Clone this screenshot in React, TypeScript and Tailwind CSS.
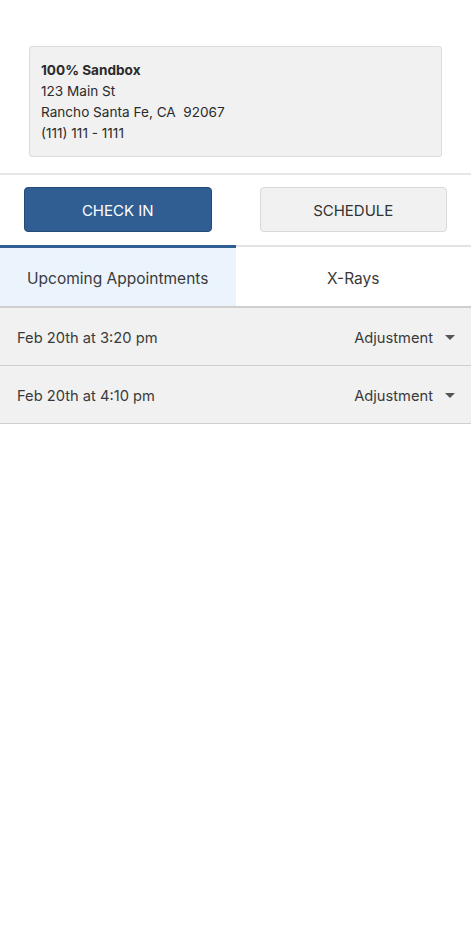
const appointments = [
  { when: "Feb 20th at 3:20 pm", type: "Adjustment" },
  { when: "Feb 20th at 4:10 pm", type: "Adjustment" },
];

export default function App() {
  return (
    <div className="min-h-[942px] w-full bg-white font-['Inter','Roboto',sans-serif] text-[#333]">
      {/* office card */}
      <div className="px-[29px] pt-[46px] pb-[16px]">
        <div className="rounded-[3px] border border-[#dcdcdc] bg-[#f1f1f1] px-[11px] pt-[13px] pb-[12px] text-[13.6px] leading-[21px] text-[#2b2b2b]">
          <p className="font-bold">100% Sandbox</p>
          <p>123 Main St</p>
          <p>Rancho Santa Fe, CA&nbsp; 92067</p>
          <p>(111) 111 - 1111</p>
        </div>
      </div>

      <div className="h-[2px] bg-[#e6e6e6]" />

      {/* actions */}
      <div className="grid grid-cols-2 gap-[48px] px-[24px] pt-[12px] pb-[13px]">
        <button className="h-[45px] rounded-[4px] border border-[#244a76] bg-[#305d92] pt-[3px] text-[15px] text-white">
          CHECK IN
        </button>
        <button className="h-[45px] rounded-[4px] border border-[#d9d9d9] bg-[#f1f1f1] pt-[3px] text-[15px] text-[#333]">
          SCHEDULE
        </button>
      </div>

      {/* tabs */}
      <div className="grid grid-cols-2 border-b-2 border-[#cfcfcf]">
        <div className="flex h-[61px] items-center justify-center border-t-[3px] border-[#305d92] bg-[#ebf3fd] pt-[3px] text-[15.5px] text-[#3a3a3a]">
          Upcoming Appointments
        </div>
        <div className="flex h-[61px] items-center justify-center border-t-[2px] border-[#e3e3e3] bg-white pt-[4px] text-[15.5px] text-[#3a3a3a]">
          X-Rays
        </div>
      </div>

      {/* appointments */}
      <div>
        {appointments.map((a) => (
          <div
            key={a.when}
            className="flex h-[58px] items-center justify-between border-b border-[#d0d0d0] bg-[#f1f1f1] pt-[3px] pl-[17px] pr-[16px] text-[14.7px] text-[#3a3a3a]"
          >
            <span>{a.when}</span>
            <span className="flex items-center gap-[10px]">
              {a.type}
              <svg width="10" height="6" viewBox="0 0 10 6" className="ml-[2px]">
                <path d="M0 0h10L5 5z" fill="#555" />
              </svg>
            </span>
          </div>
        ))}
      </div>
    </div>
  );
}
